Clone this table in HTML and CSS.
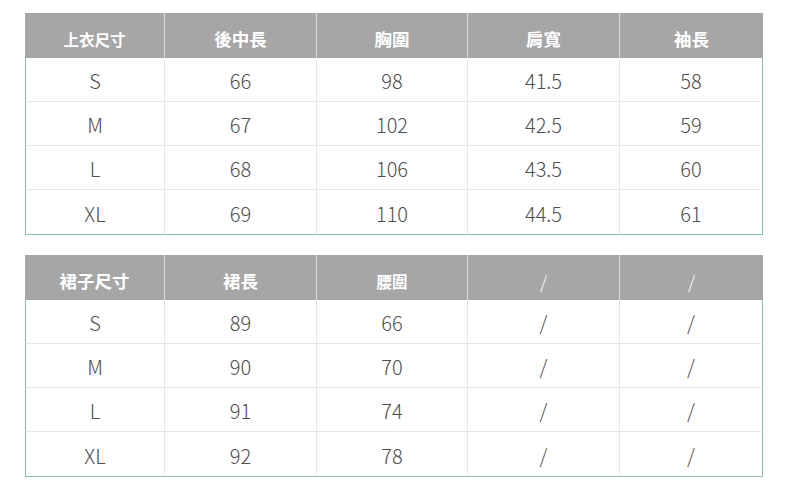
FILE: index.html
```html
<!DOCTYPE html>
<html lang="zh-Hant">
<head>
<meta charset="utf-8">
<link rel="stylesheet" href="styles.css">
</head>
<body>
<div class="sheet">
  <table class="size-table">
    <colgroup>
      <col class="c1"><col class="c2"><col class="c3"><col class="c4"><col class="c5">
    </colgroup>
    <thead>
      <tr><th class="small">上衣尺寸</th><th>後中長</th><th>胸圍</th><th>肩寬</th><th>袖長</th></tr>
    </thead>
    <tbody>
      <tr><td>S</td><td>66</td><td>98</td><td>41.5</td><td>58</td></tr>
      <tr><td>M</td><td>67</td><td>102</td><td>42.5</td><td>59</td></tr>
      <tr><td>L</td><td>68</td><td>106</td><td>43.5</td><td>60</td></tr>
      <tr><td>XL</td><td>69</td><td>110</td><td>44.5</td><td>61</td></tr>
    </tbody>
  </table>
  <table class="size-table">
    <colgroup>
      <col class="c1"><col class="c2"><col class="c3"><col class="c4"><col class="c5">
    </colgroup>
    <thead>
      <tr><th>裙子尺寸</th><th>裙長</th><th class="small">腰圍</th><th class="slash">/</th><th class="slash">/</th></tr>
    </thead>
    <tbody>
      <tr><td>S</td><td>89</td><td>66</td><td>/</td><td>/</td></tr>
      <tr><td>M</td><td>90</td><td>70</td><td>/</td><td>/</td></tr>
      <tr><td>L</td><td>91</td><td>74</td><td>/</td><td>/</td></tr>
      <tr><td>XL</td><td>92</td><td>78</td><td>/</td><td>/</td></tr>
    </tbody>
  </table>
</div>
</body>
</html>
```

FILE: styles.css
```css
html, body {
  margin: 0;
  padding: 0;
  background: #ffffff;
}

.sheet {
  padding: 13px 0 0 25px;
  display: flex;
  flex-direction: column;
  gap: 20px;
}

.size-table {
  width: 738px;
  table-layout: fixed;
  border-collapse: separate;
  border-spacing: 0;
  font-family: "Noto Sans CJK TC", "Noto Sans", sans-serif;
  text-align: center;
}

.c1 { width: 139px; }
.c2 { width: 152px; }
.c3 { width: 151px; }
.c4 { width: 152px; }
.c5 { width: 144px; }

.size-table th {
  background: #a6a6a6;
  color: #ffffff;
  font-size: 17.5px;
  font-weight: 700;
  height: 45px;
  box-sizing: border-box;
  padding: 6px 0 0;
  border-left: 1px solid #d9d9d9;
  line-height: 20px;
}

.size-table th:first-child {
  border-left: none;
}

.size-table th.small {
  font-size: 15.5px;
}

.size-table th.slash {
  font-weight: 300;
  font-size: 18px;
}

.size-table td {
  height: 44px;
  box-sizing: border-box;
  padding: 3px 0 0;
  color: #4d4d4d;
  font-size: 20px;
  font-weight: 300;
  line-height: 24px;
  border-left: 1px solid #e6e6e6;
  border-top: 1px solid #e6e6e6;
}

.size-table tbody tr:first-child td {
  height: 43px;
  border-top: none;
}

.size-table tbody tr:last-child td {
  height: 46px;
  border-bottom: 1px solid #86bcb5;
}

.size-table td:first-child {
  border-left: 1px solid #86bcb5;
}

.size-table td:last-child {
  border-right: 1px solid #86bcb5;
}
```
